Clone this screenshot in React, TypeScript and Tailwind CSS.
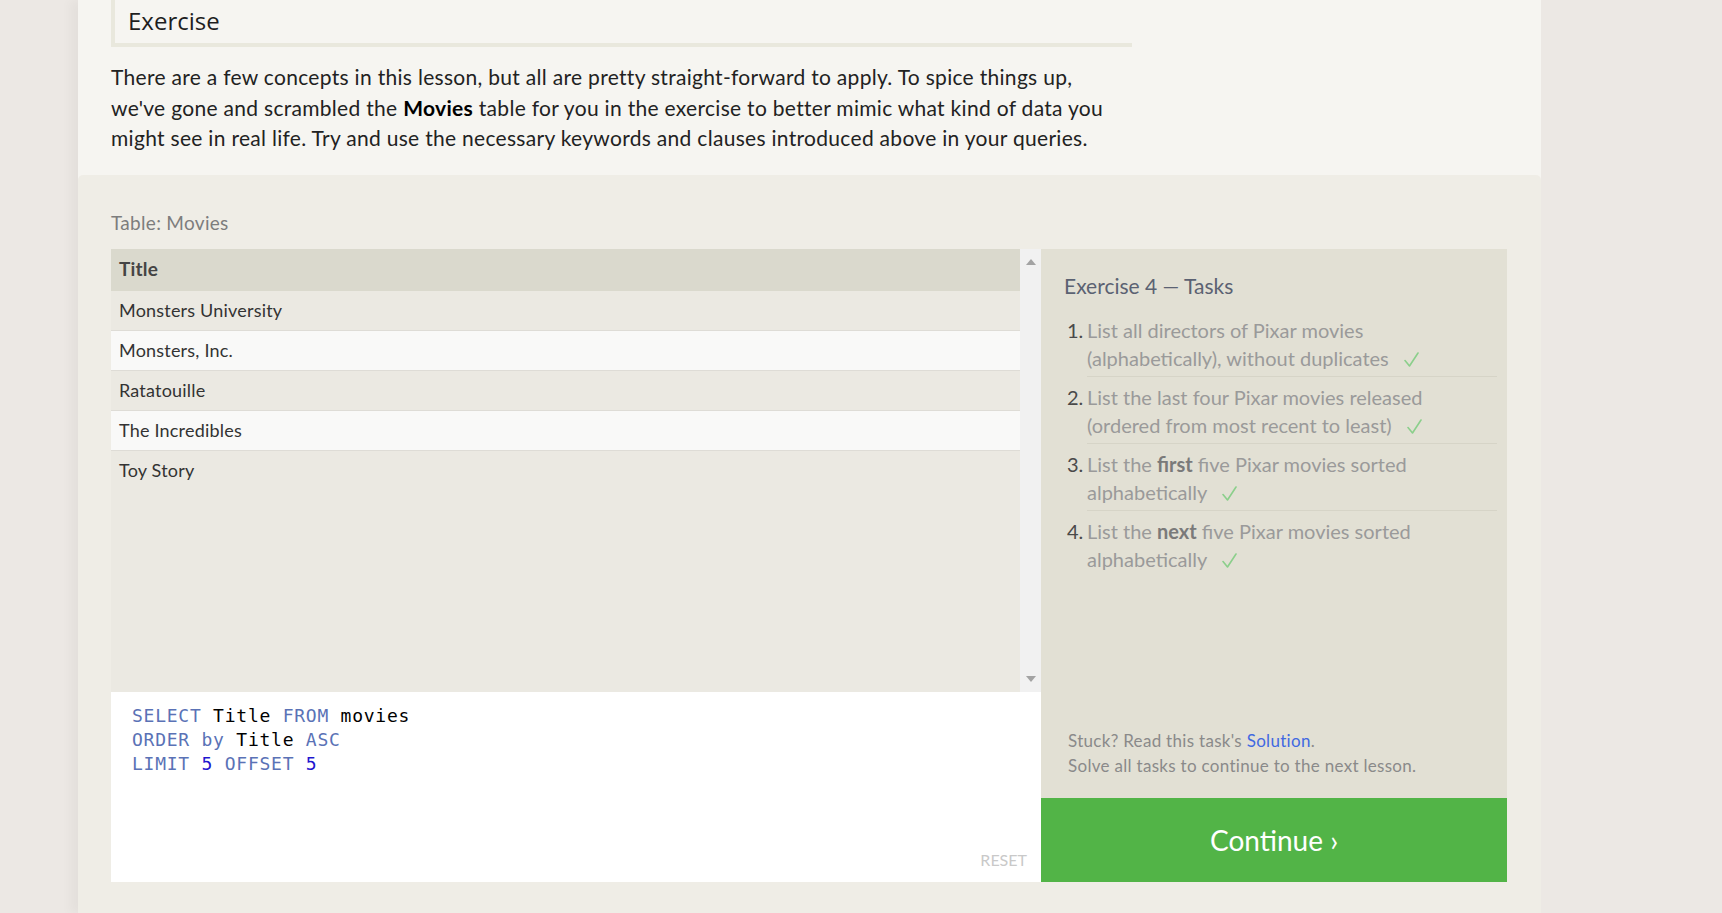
import React from "react";

const rows = ["Monsters University", "Monsters, Inc.", "Ratatouille", "The Incredibles", "Toy Story"];

function Check() {
  return (
    <svg className="inline-block ml-[15px] align-[-1px]" width="15" height="15" viewBox="0 0 15 15">
      <path d="M1 8.5 L5.5 14 L14 1" fill="none" stroke="#8bcf8b" strokeWidth="1.6" strokeLinecap="round" strokeLinejoin="round" />
    </svg>
  );
}

export default function App() {
  const kw = "text-[#5a72b6]";
  const num = "text-[#1f16cf]";
  return (
    <div className="min-h-screen w-full bg-[#ece8e4] overflow-hidden" style={{ fontFamily: "Lato, 'Open Sans', sans-serif" }}>
      <div className="ml-[78px] w-[1463px] min-h-[913px] bg-[#f6f5f1] shadow-[-8px_0_10px_rgba(0,0,0,0.035)] flex flex-col">
        {/* Top section */}
        <div className="pl-[33px] pb-[21px]">
          <div className="w-[1021px] h-[47px] border-l-4 border-b-4 border-[#e9e8dd] pl-[13px] pt-[5px]">
            <div className="text-[24px] leading-[32px] text-[#1e1e1e]" style={{ fontFamily: "'Open Sans', sans-serif" }}>Exercise</div>
          </div>
          <p className="mt-[15px] text-[21px] leading-[30.5px] tracking-[0.3px] text-[#222]">
            There are a few concepts in this lesson, but all are pretty straight-forward to apply. To spice things up,
            <br />
            we've gone and scrambled the <b className="font-bold text-black">Movies</b> table for you in the exercise to better mimic what kind of data you
            <br />
            might see in real life. Try and use the necessary keywords and clauses introduced above in your queries.
          </p>
        </div>

        {/* Lower section */}
        <div className="flex-1 bg-[#efede6] rounded-t-[5px] px-[33px] pt-[35px] pb-[32px]">
          <div className="text-[19px] leading-[26px] tracking-[0.3px] text-[#7d7d7d] mb-[13px]">Table: Movies</div>
          <div className="flex">
            {/* Left column */}
            <div className="w-[930px] flex flex-col">
              <div className="h-[443px] flex bg-[#ebe9e2]">
                <div className="flex-1 flex flex-col">
                  <div className="h-[42px] bg-[#dad9cd] flex items-center pl-[8px] text-[19px] tracking-[0.2px] font-bold text-[#444]">Title</div>
                  {rows.map((r, i) => (
                    <div
                      key={r}
                      className={`h-[40px] flex items-center pl-[8px] text-[18px] tracking-[0.2px] text-[#333] ${i < rows.length - 1 ? "border-b border-[#dedcd6]" : ""} ${i % 2 === 1 ? "bg-[#f9f9f8]" : "bg-[#ebe9e2]"}`}
                    >
                      {r}
                    </div>
                  ))}
                </div>
                <div className="w-[21px] bg-[#f1f1f1] flex flex-col items-center justify-between py-[10px]">
                  <svg width="10" height="6" viewBox="0 0 10 6"><path d="M5 0 L10 6 L0 6 Z" fill="#a3a3a3" /></svg>
                  <svg width="10" height="6" viewBox="0 0 10 6"><path d="M0 0 L10 0 L5 6 Z" fill="#a3a3a3" /></svg>
                </div>
              </div>
              <div className="h-[190px] bg-white relative pl-[21px] pt-[12px]">
                <pre className="text-[18px] leading-[24px] tracking-[0.75px] text-black" style={{ fontFamily: "'DejaVu Sans Mono', monospace" }}>
                  <span className={kw}>SELECT</span> Title <span className={kw}>FROM</span> movies{"\n"}
                  <span className={kw}>ORDER</span> <span className={kw}>by</span> Title <span className={kw}>ASC</span>{"\n"}
                  <span className={kw}>LIMIT</span> <span className={num}>5</span> <span className={kw}>OFFSET</span> <span className={num}>5</span>
                </pre>
                <div className="absolute right-[14px] bottom-[12px] text-[16px] leading-[20px] text-[#c9c9c9]">RESET</div>
              </div>
            </div>

            {/* Right column */}
            <div className="w-[466px] flex flex-col">
              <div className="flex-1 bg-[#e2e0d4] flex flex-col pl-[23px] pr-[10px] pt-[23px] pb-[20px]">
                <div className="text-[21px] leading-[28px] text-[#5b6272]">Exercise 4 — Tasks</div>
                <ol className="mt-[10px] pl-[3px] text-[20px] leading-[28px] text-[#9a9a9a]">
                  {[
                    <>List all directors of Pixar movies<br />(alphabetically), without duplicates<Check /></>,
                    <>List the last four Pixar movies released<br />(ordered from most recent to least)<Check /></>,
                    <>List the <b className="font-bold text-[#7a7a7a]">first</b> five Pixar movies sorted<br />alphabetically<Check /></>,
                    <>List the <b className="font-bold text-[#7a7a7a]">next</b> five Pixar movies sorted<br />alphabetically<Check /></>,
                  ].map((c, i, arr) => (
                    <li key={i} className="flex">
                      <span className="w-[20px] pt-[6px] shrink-0 text-[#4a4a4a]">{i + 1}.</span>
                      <div className={`flex-1 pt-[6px] pb-[4px] ${i < arr.length - 1 ? "border-b border-[#d6d4c7]" : ""}`}>{c}</div>
                    </li>
                  ))}
                </ol>
                <div className="mt-auto pl-[4px] text-[17px] leading-[25px] tracking-[0.3px] text-[#8a8a8a]">
                  <div>
                    Stuck? Read this task's <span className="text-[#4169e1]">Solution</span>.
                  </div>
                  <div>Solve all tasks to continue to the next lesson.</div>
                </div>
              </div>
              <div className="h-[84px] bg-[#52b447] flex items-center justify-center text-white text-[28px]">Continue ›</div>
            </div>
          </div>
        </div>
      </div>
    </div>
  );
}
